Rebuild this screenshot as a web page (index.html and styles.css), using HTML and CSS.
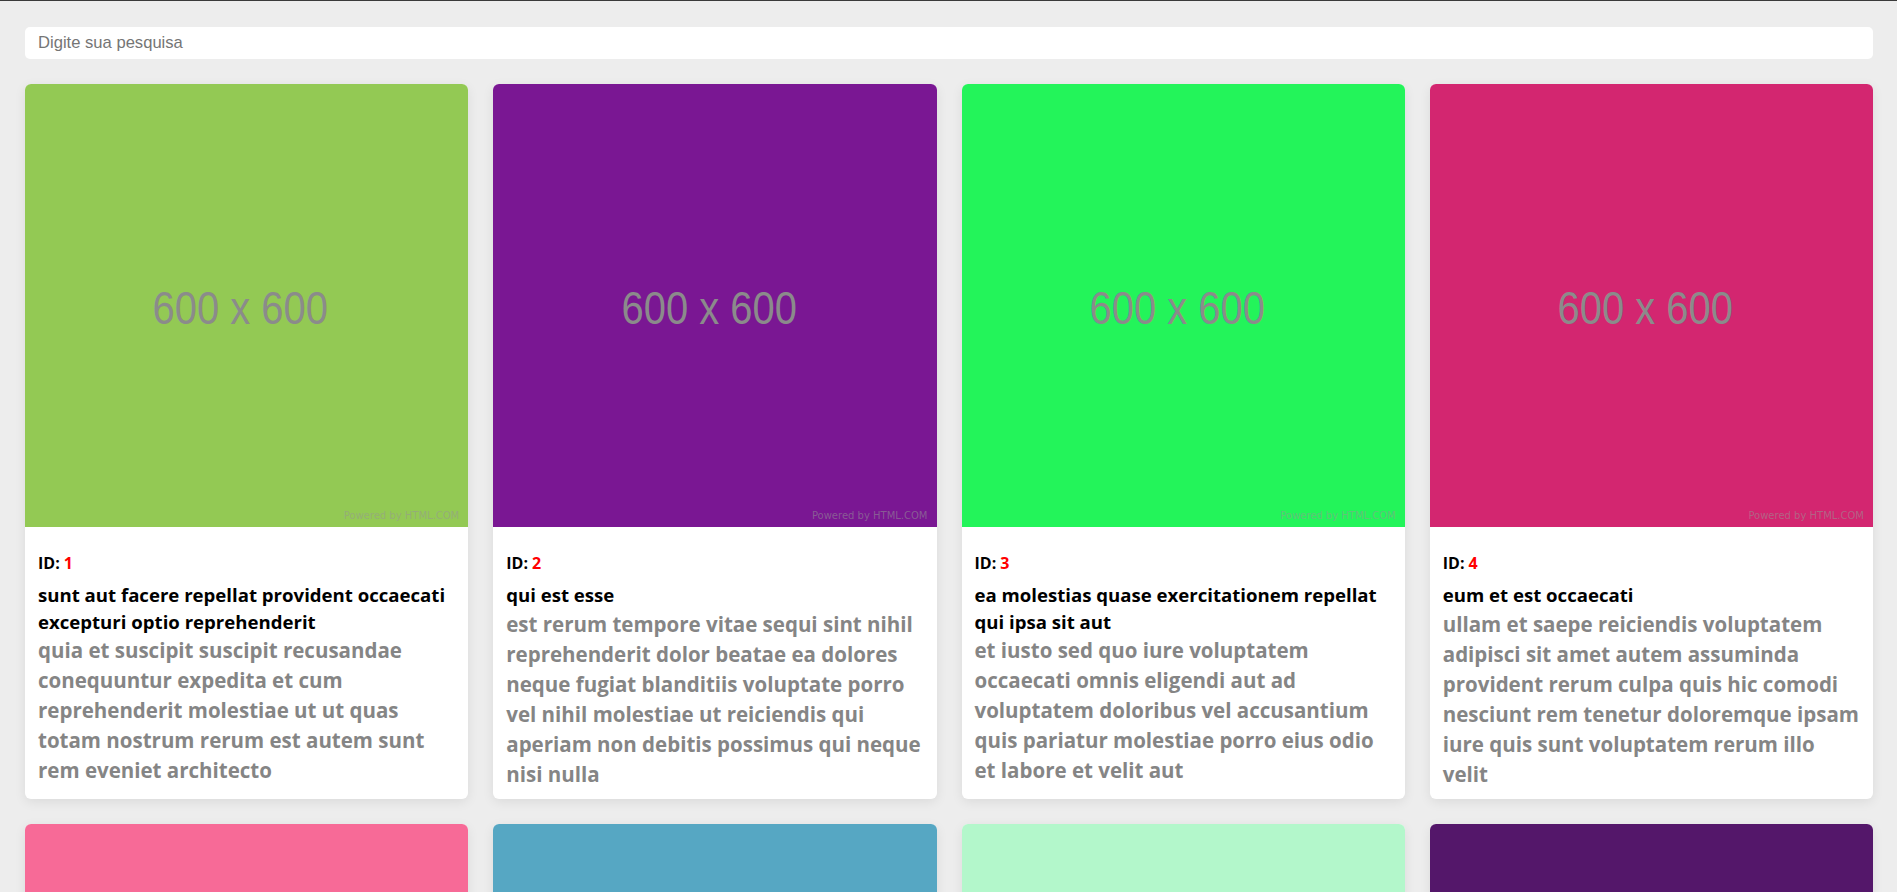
FILE: index.html
```html
<!DOCTYPE html>
<html lang="pt-BR">
<head>
<meta charset="utf-8">
<title>Posts</title>
<link rel="stylesheet" href="styles.css">
</head>
<body>
<main class="page">
  <input class="search" type="text" placeholder="Digite sua pesquisa">
  <section class="grid">
    <article class="card">
      <div class="thumb" style="background-color:#93c954"><span class="thumb-size">600 x 600</span><span class="thumb-credit">Powered by HTML.COM</span></div>
      <div class="card-body">
        <p class="card-id">ID: <span class="num">1</span></p>
        <h2 class="card-title">sunt aut facere repellat provident occaecati excepturi optio reprehenderit</h2>
        <p class="card-text">quia et suscipit suscipit recusandae conequuntur expedita et cum reprehenderit molestiae ut ut quas totam nostrum rerum est autem sunt rem eveniet architecto</p>
      </div>
    </article>
    <article class="card">
      <div class="thumb" style="background-color:#7a1793"><span class="thumb-size">600 x 600</span><span class="thumb-credit">Powered by HTML.COM</span></div>
      <div class="card-body">
        <p class="card-id">ID: <span class="num">2</span></p>
        <h2 class="card-title">qui est esse</h2>
        <p class="card-text">est rerum tempore vitae sequi sint nihil reprehenderit dolor beatae ea dolores neque fugiat blanditiis voluptate porro vel nihil molestiae ut reiciendis qui aperiam non debitis possimus qui neque nisi nulla</p>
      </div>
    </article>
    <article class="card">
      <div class="thumb" style="background-color:#23f45a"><span class="thumb-size">600 x 600</span><span class="thumb-credit">Powered by HTML.COM</span></div>
      <div class="card-body">
        <p class="card-id">ID: <span class="num">3</span></p>
        <h2 class="card-title">ea molestias quase exercitationem repellat qui ipsa sit aut</h2>
        <p class="card-text">et iusto sed quo iure voluptatem occaecati omnis eligendi aut ad voluptatem doloribus vel accusantium quis pariatur molestiae porro eius odio et labore et velit aut</p>
      </div>
    </article>
    <article class="card">
      <div class="thumb" style="background-color:#d32670"><span class="thumb-size">600 x 600</span><span class="thumb-credit">Powered by HTML.COM</span></div>
      <div class="card-body">
        <p class="card-id">ID: <span class="num">4</span></p>
        <h2 class="card-title">eum et est occaecati</h2>
        <p class="card-text">ullam et saepe reiciendis voluptatem adipisci sit amet autem assuminda provident rerum culpa quis hic comodi nesciunt rem tenetur doloremque ipsam iure quis sunt voluptatem rerum illo<br>velit</p>
      </div>
    </article>
    <article class="card">
      <div class="thumb" style="background-color:#f76a97"><span class="thumb-size">600 x 600</span><span class="thumb-credit">Powered by HTML.COM</span></div>
      <div class="card-body">
        <p class="card-id">ID: <span class="num">5</span></p>
        <h2 class="card-title">nesciunt quas odio</h2>
        <p class="card-text">repudiandae veniam quaerat sunt sed alias aut fugiat sit autem sed est voluptatem omnis possimus esse voluptatibus quis est aut tenetur dolor neque</p>
      </div>
    </article>
    <article class="card">
      <div class="thumb" style="background-color:#56a7c3"><span class="thumb-size">600 x 600</span><span class="thumb-credit">Powered by HTML.COM</span></div>
      <div class="card-body">
        <p class="card-id">ID: <span class="num">6</span></p>
        <h2 class="card-title">dolorem eum magni eos aperiam quia</h2>
        <p class="card-text">ut aspernatur corporis harum nihil quis provident sequi mollitia nobis aliquid molestiae perspiciatis et ea nemo ab reprehenderit accusantium quas voluptate dolores velit et doloremque molestiae</p>
      </div>
    </article>
    <article class="card">
      <div class="thumb" style="background-color:#b3f7cb"><span class="thumb-size">600 x 600</span><span class="thumb-credit">Powered by HTML.COM</span></div>
      <div class="card-body">
        <p class="card-id">ID: <span class="num">7</span></p>
        <h2 class="card-title">magnam facilis autem</h2>
        <p class="card-text">dolore placeat quibusdam ea quo vitae magni quis enim qui quis quo nemo aut saepe quidem repellat excepturi ut quia sunt ut sequi eos ea sed quas</p>
      </div>
    </article>
    <article class="card">
      <div class="thumb" style="background-color:#54176a"><span class="thumb-size">600 x 600</span><span class="thumb-credit">Powered by HTML.COM</span></div>
      <div class="card-body">
        <p class="card-id">ID: <span class="num">8</span></p>
        <h2 class="card-title">dolorem dolore est ipsam</h2>
        <p class="card-text">dignissimos aperiam dolorem qui eum facilis quibusdam animi sint suscipit qui sint possimus cum quaerat magni maiores excepturi ipsam ut commodi dolor voluptatum modi aut vitae</p>
      </div>
    </article>
  </section>
</main>
</body>
</html>
```

FILE: styles.css
```css
* { box-sizing: border-box; }

html, body {
  margin: 0;
  padding: 0;
  background: #ededed;
}

body {
  border-top: 1px solid #3a3a3a;
  font-family: "Open Sans", "Noto Sans", sans-serif;
}

.page {
  padding: 26px 24px 40px 25px;
  display: flex;
  flex-direction: column;
  gap: 25px;
}

.search {
  display: block;
  width: 100%;
  height: 32px;
  border: none;
  border-radius: 5px;
  background: #fff;
  padding: 0 13px;
  font-family: "Liberation Sans", Arial, sans-serif;
  font-size: 16.6px;
  color: #333;
  outline: none;
}

.search::placeholder {
  color: #757575;
}

.grid {
  display: grid;
  grid-template-columns: repeat(4, 1fr);
  gap: 25px;
}

.card {
  background: #fff;
  border-radius: 6px;
  overflow: hidden;
  box-shadow: 0 3px 12px rgba(0, 0, 0, 0.08);
  display: flex;
  flex-direction: column;
}

.thumb {
  position: relative;
  aspect-ratio: 1 / 1;
  display: flex;
  align-items: center;
  justify-content: center;
}

.thumb-size {
  font-family: "Liberation Sans", Arial, sans-serif;
  font-size: 47px;
  color: #8b8b8b;
  transform: translate(-6px, 2px) scaleX(0.85);
  white-space: nowrap;
}

.thumb-credit {
  position: absolute;
  right: 9px;
  bottom: 5px;
  font-family: "DejaVu Sans", sans-serif;
  font-size: 10px;
  line-height: 12px;
  color: rgba(150, 150, 150, 0.55);
}

.card-body {
  padding: 26px 9px 10px 13px;
}

.card-id {
  margin: 0 0 8px;
  font-size: 16px;
  line-height: 21px;
  font-weight: 700;
  color: #000;
}

.num {
  color: #f00;
}

.card-title {
  margin: 0;
  font-size: 18.6px;
  line-height: 26.5px;
  font-weight: 700;
  color: #000;
}

.card-text {
  margin: 0;
  font-size: 20.5px;
  line-height: 30px;
  font-weight: 700;
  color: #858585;
}
```
